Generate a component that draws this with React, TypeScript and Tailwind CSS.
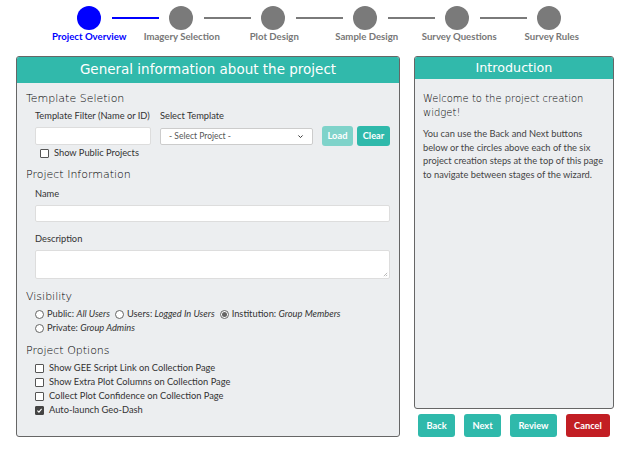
import { useState } from 'react';

const steps = [
  'Project Overview',
  'Imagery Selection',
  'Plot Design',
  'Sample Design',
  'Survey Questions',
  'Survey Rules',
];

const body = { fontFamily: 'Lato, "Liberation Sans", sans-serif' };
const head = { fontFamily: '"DejaVu Sans", Lato, sans-serif' };

function Stepper() {
  return (
    <div className="pt-[6px]">
      <div className="flex items-center pl-[77px]">
        {steps.map((s, i) => (
          <div key={s} className="flex items-center">
            <div className={`w-6 h-6 rounded-full ${i === 0 ? 'bg-[#0000ff]' : 'bg-[#7a7a7a]'}`} />
            {i < steps.length - 1 && (
              <div className={`w-[47px] h-[2px] mx-[10.5px] ${i === 0 ? 'bg-[#0000ff]' : 'bg-[#7a7a7a]'}`} />
            )}
          </div>
        ))}
      </div>
      <div className="flex pl-[43px]">
        {steps.map((s, i) => (
          <div
            key={s}
            className={`w-[92.5px] text-center text-[9.6px] font-bold leading-[14px] whitespace-nowrap ${i === 0 ? 'text-[#0000ff]' : 'text-[#777]'}`}
          >
            {s}
          </div>
        ))}
      </div>
    </div>
  );
}

function Check({ checked = false, label }: { checked?: boolean; label: string }) {
  return (
    <label className="flex items-center gap-[5px] h-[14px] whitespace-nowrap">
      <span
        className={`w-[9px] h-[9px] border rounded-[1px] flex items-center justify-center ${checked ? 'bg-[#444] border-[#444]' : 'bg-white border-[#555]'}`}
      >
        {checked && (
          <svg viewBox="0 0 10 10" className="w-[7px] h-[7px]">
            <path d="M2 5.2 L4.2 7.3 L8 2.8" stroke="white" strokeWidth="1.6" fill="none" />
          </svg>
        )}
      </span>
      <span>{label}</span>
    </label>
  );
}

function Radio({ checked = false, label, value }: { checked?: boolean; label: string; value: string }) {
  return (
    <label className="flex items-center gap-[3px] mr-[5px] whitespace-nowrap">
      <span className="w-[9px] h-[9px] rounded-full border border-[#666] bg-white flex items-center justify-center">
        {checked && <span className="w-[5px] h-[5px] rounded-full bg-[#666]" />}
      </span>
      <span>
        {label}: <i>{value}</i>
      </span>
    </label>
  );
}

function SectionTitle({ children, className = '' }: { children: string; className?: string }) {
  return (
    <div className={`text-[11px] font-light text-black leading-[16px] ${className}`} style={head}>
      {children}
    </div>
  );
}

export default function App() {
  const [filter, setFilter] = useState('');
  return (
    <div className="w-[624px] h-[450px] bg-white text-[#333] text-[9.3px] overflow-hidden" style={body}>
      <Stepper />
      <div className="flex gap-[14px] pl-[16px] mt-[12px]">
        {/* Left panel */}
        <div className="w-[384px] shrink-0 h-[381px] border border-[#666] rounded-[3px] bg-[#eceef0] overflow-hidden">
          <div className="h-[26px] bg-[#31b9ab] text-white text-center text-[13.5px] leading-[25px]" style={head}>
            General information about the project
          </div>
          <div className="px-[9px] pt-[8px]">
            <SectionTitle>Template Seletion</SectionTitle>
            <div className="flex pl-[9px] mt-[1px]">
              <div className="w-[116px]">
                <div className="leading-[16px] whitespace-nowrap">Template Filter (Name or ID)</div>
                <input
                  value={filter}
                  onChange={(e) => setFilter(e.target.value)}
                  className="mt-[3px] w-[116px] h-[18px] bg-white border border-[#ddd] rounded-[2px] outline-none"
                />
                <div className="mt-[1px] pl-[5px]">
                  <Check label="Show Public Projects" />
                </div>
              </div>
              <div className="ml-[9px] w-[154px]">
                <div className="leading-[16px]">Select Template</div>
                <div className="mt-[4px] h-[17px] bg-white border border-[#ccc] rounded-[2px] flex items-center justify-between px-[8px] text-[8.5px] text-[#555]">
                  <span>- Select Project -</span>
                  <svg viewBox="0 0 10 10" className="w-[7px] h-[7px]">
                    <path d="M2 3.5 L5 6.5 L8 3.5" stroke="#333" strokeWidth="1.4" fill="none" />
                  </svg>
                </div>
              </div>
              <div className="flex gap-[4px] ml-[9px] mt-[18px] h-[20px]">
                <button className="w-[31px] rounded-[3px] bg-[#7fd3ca] text-white font-bold text-[9.3px]">Load</button>
                <button className="w-[33px] rounded-[3px] bg-[#2fb9ab] text-white font-bold text-[9.3px]">Clear</button>
              </div>
            </div>

            <SectionTitle className="mt-[7px]">Project Information</SectionTitle>
            <div className="pl-[9px]">
              <div className="leading-[16px] mt-[3px]">Name</div>
              <div className="mt-[3px] h-[17px] bg-white border border-[#ddd] rounded-[2px]" />
              <div className="leading-[16px] mt-[9px]">Description</div>
              <div className="mt-[3px] h-[29px] bg-white border border-[#ddd] rounded-[2px] relative">
                <svg viewBox="0 0 6 6" className="absolute right-[1px] bottom-[1px] w-[5px] h-[5px]">
                  <path d="M5 1 L1 5 M5 3.5 L3.5 5" stroke="#999" strokeWidth="0.8" />
                </svg>
              </div>
            </div>

            <SectionTitle className="mt-[10px]">Visibility</SectionTitle>
            <div className="pl-[9px] mt-[2px]">
              <div className="flex items-center h-[14px]">
                <Radio label="Public" value="All Users" />
                <Radio label="Users" value="Logged In Users" />
                <Radio checked label="Institution" value="Group Members" />
              </div>
              <div className="flex items-center h-[14px]">
                <Radio label="Private" value="Group Admins" />
              </div>
            </div>

            <SectionTitle className="mt-[8px]">Project Options</SectionTitle>
            <div className="pl-[9px] mt-[2px]">
              <Check label="Show GEE Script Link on Collection Page" />
              <Check label="Show Extra Plot Columns on Collection Page" />
              <Check label="Collect Plot Confidence on Collection Page" />
              <Check checked label="Auto-launch Geo-Dash" />
            </div>
          </div>
        </div>

        {/* Right panel */}
        <div className="w-[200px] shrink-0 flex flex-col">
          <div className="h-[353px] border border-[#666] rounded-[3px] bg-[#eceef0] overflow-hidden">
            <div className="h-[22px] bg-[#31b9ab] text-white text-center text-[12.7px] leading-[21px]" style={head}>
              Introduction
            </div>
            <div className="px-[8px] pt-[13px]">
              <div className="text-[10px] font-light text-black leading-[14px]" style={head}>
                Welcome to the project creation widget!
              </div>
              <p className="mt-[7px] leading-[13.7px] text-[#444] text-[9.3px]">
                You can use the Back and Next buttons below or the circles above each of the six project creation steps at the top of this page to navigate between stages of the wizard.
              </p>
            </div>
          </div>
          <div className="flex justify-between px-[4px] mt-[5px]">
            <button className="w-[37px] h-[23px] rounded-[3px] bg-[#2fb9ab] text-white font-bold text-[9.3px]">Back</button>
            <button className="w-[37px] h-[23px] rounded-[3px] bg-[#2fb9ab] text-white font-bold text-[9.3px]">Next</button>
            <button className="w-[47px] h-[23px] rounded-[3px] bg-[#2fb9ab] text-white font-bold text-[9.3px]">Review</button>
            <button className="w-[44px] h-[23px] rounded-[3px] bg-[#c21e24] text-white font-bold text-[9.3px]">Cancel</button>
          </div>
        </div>
      </div>
    </div>
  );
}
